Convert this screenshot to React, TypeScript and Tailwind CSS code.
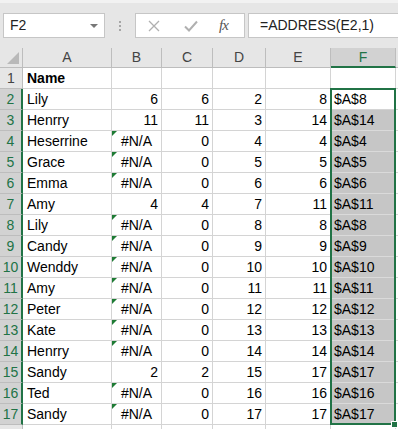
import React from "react";

type Row = { a: string; b: string; c: string; d: string; e: string; f: string };

const data: Row[] = [
  { a: "Name", b: "", c: "", d: "", e: "", f: "" },
  { a: "Lily", b: "6", c: "6", d: "2", e: "8", f: "$A$8" },
  { a: "Henrry", b: "11", c: "11", d: "3", e: "14", f: "$A$14" },
  { a: "Heserrine", b: "#N/A", c: "0", d: "4", e: "4", f: "$A$4" },
  { a: "Grace", b: "#N/A", c: "0", d: "5", e: "5", f: "$A$5" },
  { a: "Emma", b: "#N/A", c: "0", d: "6", e: "6", f: "$A$6" },
  { a: "Amy", b: "4", c: "4", d: "7", e: "11", f: "$A$11" },
  { a: "Lily", b: "#N/A", c: "0", d: "8", e: "8", f: "$A$8" },
  { a: "Candy", b: "#N/A", c: "0", d: "9", e: "9", f: "$A$9" },
  { a: "Wenddy", b: "#N/A", c: "0", d: "10", e: "10", f: "$A$10" },
  { a: "Amy", b: "#N/A", c: "0", d: "11", e: "11", f: "$A$11" },
  { a: "Peter", b: "#N/A", c: "0", d: "12", e: "12", f: "$A$12" },
  { a: "Kate", b: "#N/A", c: "0", d: "13", e: "13", f: "$A$13" },
  { a: "Henrry", b: "#N/A", c: "0", d: "14", e: "14", f: "$A$14" },
  { a: "Sandy", b: "2", c: "2", d: "15", e: "17", f: "$A$17" },
  { a: "Ted", b: "#N/A", c: "0", d: "16", e: "16", f: "$A$16" },
  { a: "Sandy", b: "#N/A", c: "0", d: "17", e: "17", f: "$A$17" },
];

const cell = "h-full border-r border-b border-[#d4d4d4] flex items-center shrink-0";

function ErrorMark() {
  return (
    <span className="absolute left-0 top-0 w-0 h-0 border-t-[5px] border-t-[#1e7b34] border-r-[5px] border-r-transparent" />
  );
}

export default function App() {
  return (
    <div className="relative w-[398px] h-[429px] overflow-hidden bg-white font-['Liberation_Sans',Arial,sans-serif] text-[14px] text-black">
      {/* formula bar */}
      <div className="h-[48px] bg-[#e6e6e6] border-t-[3px] border-t-[#f2f2f2]">
        <div className="flex items-center pt-[10px] h-[35px]">
          <div className="ml-[3px] w-[102px] h-[25px] bg-white border border-[#c6c6c6] flex items-center justify-between pl-[6px] pr-[6px]">
            <span className="text-[#222]">F2</span>
            <span className="w-0 h-0 border-l-[4px] border-l-transparent border-r-[4px] border-r-transparent border-t-[4px] border-t-[#777]" />
          </div>
          <div className="w-[30px] flex flex-col items-center gap-[2px]">
            <span className="w-[2px] h-[2px] bg-[#a6a6a6]" />
            <span className="w-[2px] h-[2px] bg-[#a6a6a6]" />
            <span className="w-[2px] h-[2px] bg-[#a6a6a6]" />
          </div>
          <div className="w-[110px] h-[25px] bg-white border border-[#c6c6c6] flex items-center">
            <svg width="12" height="12" viewBox="0 0 12 12" className="ml-[12px]">
              <path d="M1 1L11 11M11 1L1 11" stroke="#b0b0b0" strokeWidth="1.3" fill="none" />
            </svg>
            <svg width="14" height="12" viewBox="0 0 14 12" className="ml-[24px]">
              <path d="M1 6.5L5 10.5L13 1.5" stroke="#b0b0b0" strokeWidth="2" fill="none" />
            </svg>
            <span className="ml-[21px] font-['Liberation_Serif',serif] italic text-[15px] text-[#555] tracking-[-1px]">
              fx
            </span>
          </div>
          <div className="ml-[3px] flex-1 h-[25px] bg-white border border-[#c6c6c6] border-r-0 flex items-center pl-[11px] text-[#222]">
            =ADDRESS(E2,1)
          </div>
        </div>
      </div>

      {/* column headers */}
      <div className="flex h-[20px] bg-[#e6e6e6] text-[#444]">
        <div className="w-[23px] h-full border-r border-b border-[#bdbdbd] relative shrink-0">
          <span className="absolute right-[3px] bottom-[3px] w-0 h-0 border-l-[12px] border-l-transparent border-b-[12px] border-b-[#b9b9b9]" />
        </div>
        <div className="w-[89px] h-full border-r border-b border-[#bdbdbd] flex items-center justify-center shrink-0">A</div>
        <div className="w-[50px] h-full border-r border-b border-[#bdbdbd] flex items-center justify-center shrink-0">B</div>
        <div className="w-[51px] h-full border-r border-b border-[#bdbdbd] flex items-center justify-center shrink-0">C</div>
        <div className="w-[53px] h-full border-r border-b border-[#bdbdbd] flex items-center justify-center shrink-0">D</div>
        <div className="w-[65px] h-full border-r border-b border-[#bdbdbd] flex items-center justify-center shrink-0">E</div>
        <div className="w-[65px] h-full border-r border-[#bdbdbd] border-b-2 border-b-[#217346] bg-[#d2d2d2] text-[#217346] flex items-center justify-center shrink-0">F</div>
        <div className="flex-1 h-full border-b border-[#bdbdbd]" />
      </div>

      {/* rows */}
      {data.map((r, i) => {
        const n = i + 1;
        const sel = n >= 2;
        const err = r.b === "#N/A";
        return (
          <div key={n} className="flex h-[21px]">
            {sel ? (
              <div className="w-[23px] h-full bg-[#d2d2d2] border-b border-b-[#bdbdbd] border-r-2 border-r-[#217346] text-[#217346] flex items-center justify-center shrink-0">
                {n}
              </div>
            ) : (
              <div className="w-[23px] h-full bg-[#e6e6e6] border-b border-r border-[#bdbdbd] text-[#444] flex items-center justify-center shrink-0">
                {n}
              </div>
            )}
            <div className={`${cell} w-[89px] pl-[4px] ${n === 1 ? "font-bold" : ""}`}>{r.a}</div>
            <div className={`${cell} w-[50px] relative ${err ? "justify-center" : "justify-end pr-[3px]"}`}>
              {err && <ErrorMark />}
              {r.b}
            </div>
            <div className={`${cell} w-[51px] justify-end pr-[3px]`}>{r.c}</div>
            <div className={`${cell} w-[53px] justify-end pr-[3px]`}>{r.d}</div>
            <div className={`${cell} w-[65px] justify-end pr-[3px]`}>{r.e}</div>
            <div
              className={`h-full border-r border-b flex items-center shrink-0 w-[65px] pl-[3px] ${
                n >= 3 ? "bg-[#c6c6c6] border-[#dadada]" : "border-[#d4d4d4]"
              }`}
            >
              {r.f}
            </div>
            <div className="flex-1 h-full border-b border-[#d4d4d4]" />
          </div>
        );
      })}
      <div className="flex h-[10px]">
        <div className="w-[23px] h-full bg-[#e6e6e6] border-r border-[#bdbdbd] shrink-0" />
        <div className="w-[89px] h-full border-r border-[#d4d4d4] shrink-0" />
        <div className="w-[50px] h-full border-r border-[#d4d4d4] shrink-0" />
        <div className="w-[51px] h-full border-r border-[#d4d4d4] shrink-0" />
        <div className="w-[53px] h-full border-r border-[#d4d4d4] shrink-0" />
        <div className="w-[65px] h-full border-r border-[#d4d4d4] shrink-0" />
        <div className="w-[65px] h-full border-r border-[#d4d4d4] shrink-0" />
      </div>

      {/* selection overlay F2:F17 */}
      <div className="absolute left-[330px] top-[88px] w-[66px] h-[337px] border-2 border-[#217346] pointer-events-none" />
      <div className="absolute left-[391px] top-[421px] w-[7px] h-[7px] bg-[#217346] border border-white" />
    </div>
  );
}
